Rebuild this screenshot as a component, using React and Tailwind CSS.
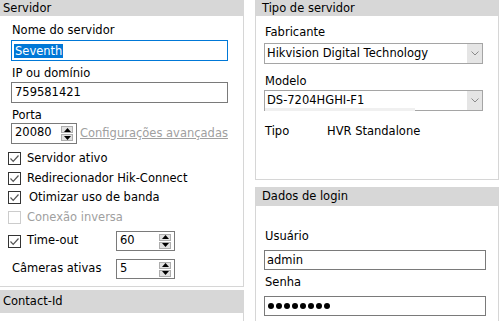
import React from "react";

const font = { fontFamily: '"DejaVu Sans", Verdana, sans-serif' };

function Spinner({ value, className = "" }) {
  return (
    <div className={`flex items-stretch border border-[#7a7a7a] bg-white ${className}`}>
      <div className="flex-1 pl-[3px] leading-[17px] text-black">{value}</div>
      <div className="flex flex-col justify-center gap-[1px] pr-[3px]">
        <div className="w-[12px] h-[7px] bg-[#e1e1e1] border border-[#adadad] flex items-center justify-center">
          <svg width="7" height="4" viewBox="0 0 7 4"><path d="M0 4 L3.5 0 L7 4 Z" fill="#000" /></svg>
        </div>
        <div className="w-[12px] h-[7px] bg-[#e1e1e1] border border-[#adadad] flex items-center justify-center">
          <svg width="7" height="4" viewBox="0 0 7 4"><path d="M0 0 L3.5 4 L7 0 Z" fill="#000" /></svg>
        </div>
      </div>
    </div>
  );
}

function Check({ label, checked = true, disabled = false, textClass = "" }) {
  return (
    <div className="flex items-center h-[19.5px]">
      <div
        className={`w-[13px] h-[13px] border flex items-center justify-center bg-white ${
          disabled ? "border-[#cccccc]" : "border-[#333333]"
        }`}
      >
        {checked && (
          <svg width="11" height="11" viewBox="0 0 11 11">
            <path d="M1.5 5.5 L4.2 8.3 L9.5 2.5" stroke="#555" strokeWidth="1.2" fill="none" />
          </svg>
        )}
      </div>
      <span className={`ml-[6px] ${disabled ? "text-[#a0a0a0]" : "text-black"} ${textClass}`}>{label}</span>
    </div>
  );
}

function Select({ value, children }) {
  return (
    <div className="relative flex h-[21px] w-[219px] border border-[#a5a5a5] bg-white">
      <div className="flex-1 pl-[2px] leading-[19px] text-black">{value}</div>
      <div className="w-[15px] bg-[#e5e5e5] flex items-center justify-center">
        <svg width="8" height="5" viewBox="0 0 8 5">
          <path d="M0.5 0.5 L4 4 L7.5 0.5" stroke="#8a8a8a" strokeWidth="1" fill="none" />
        </svg>
      </div>
      {children}
    </div>
  );
}

export default function App() {
  return (
    <div className="w-[502px] h-[321px] overflow-hidden bg-white text-[11.5px] text-black flex" style={font}>
      {/* Left column */}
      <div className="w-[244px] flex flex-col">
        <div className="h-[16px] bg-[#d7d7d7] pl-[3px] leading-[16px]">Servidor</div>
        <div className="h-[271px] border-r border-b border-[#d6d6d6] flex flex-col pl-[11px]">
          <div className="mt-[6px] h-[16px] leading-[16px] pl-[1px]">Nome do servidor</div>
          <div className="mt-[2px] h-[21px] w-[217px] border border-[#0078d7] flex items-center pl-[2px]">
            <span className="bg-[#0078d7] text-white leading-[14px] px-[1px]">Seventh</span>
          </div>
          <div className="mt-[4px] h-[16px] leading-[16px] pl-[1px]">IP ou domínio</div>
          <div className="mt-[1px] h-[21px] w-[217px] border border-[#7a7a7a] pl-[3px] leading-[19px]">759581421</div>
          <div className="mt-[4px] h-[16px] leading-[16px] pl-[1px]">Porta</div>
          <div className="flex items-end">
            <Spinner value="20080" className="h-[21px] w-[66px] leading-[19px]" />
            <span className="ml-[3px] mb-[2px] text-[#a0a0a0] underline">Configurações avançadas</span>
          </div>
          <div className="mt-[5px] -ml-[3px] flex flex-col">
            <Check label="Servidor ativo" />
            <Check label="Redirecionador Hik-Connect" />
            <Check label="Otimizar uso de banda" textClass="ml-[8px]" />
            <Check label="Conexão inversa" checked={false} disabled />
          </div>
          <div className="mt-[4px] -ml-[3px] flex items-center h-[20px]">
            <div className="w-[108px]">
              <Check label="Time-out" />
            </div>
            <Spinner value="60" className="h-[20px] w-[59px]" />
          </div>
          <div className="mt-[8px] flex items-center h-[20px]">
            <div className="w-[105px] pl-[1px]">Câmeras ativas</div>
            <Spinner value="5" className="h-[20px] w-[59px]" />
          </div>
        </div>
        <div className="mt-[3px] h-[23px] bg-[#d7d7d7] pl-[3px] leading-[23px]">Contact-Id</div>
        <div className="flex-1 border-r border-[#d6d6d6]" />
      </div>

      {/* Right column */}
      <div className="ml-[11px] w-[244px] flex flex-col">
        <div className="h-[180px] border-x border-b border-[#d6d6d6] flex flex-col">
          <div className="h-[16px] bg-[#d7d7d7] pl-[6px] leading-[16px]">Tipo de servidor</div>
          <div className="flex flex-col pl-[8px]">
            <div className="mt-[8px] h-[16px] leading-[16px] pl-[1px]">Fabricante</div>
            <div className="mt-[3px]">
              <Select value="Hikvision Digital Technology" />
            </div>
            <div className="mt-[9px] h-[16px] leading-[16px] pl-[1px]">Modelo</div>
            <div className="mt-[1px]">
              <Select value="DS-7204HGHI-F1">
                <div className="absolute left-[0px] bottom-[-1px] w-[150px] h-[3px] bg-[#f0f0f0]" />
              </Select>
            </div>
            <div className="mt-[12px] flex h-[16px] leading-[16px]">
              <span className="w-[63px] pl-[1px]">Tipo</span>
              <span>HVR Standalone</span>
            </div>
          </div>
        </div>
        <div className="mt-[7px] flex-1 border-x border-[#d6d6d6] flex flex-col">
          <div className="h-[19px] bg-[#d7d7d7] pl-[6px] leading-[19px]">Dados de login</div>
          <div className="flex flex-col pl-[8px]">
            <div className="mt-[22px] h-[16px] leading-[16px] pl-[1px]">Usuário</div>
            <div className="mt-[6px] h-[20px] w-[222px] border border-[#7a7a7a] pl-[2px] leading-[18px]">admin</div>
            <div className="mt-[4px] h-[16px] leading-[16px] pl-[1px]">Senha</div>
            <div className="mt-[6px] h-[20px] w-[222px] border border-[#7a7a7a] pl-[3px] flex items-center gap-[2px]">
              {Array.from({ length: 8 }).map((_, i) => (
                <span key={i} className="w-[6px] h-[6px] rounded-full bg-black" />
              ))}
            </div>
          </div>
        </div>
      </div>
    </div>
  );
}
